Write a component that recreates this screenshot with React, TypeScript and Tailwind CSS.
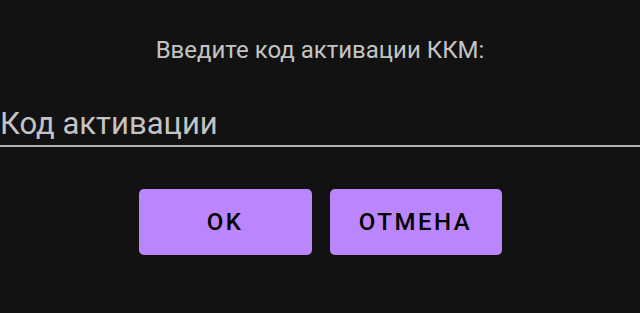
export default function App() {
  return (
    <div
      className="w-[640px] h-[313px] bg-[#121212] flex flex-col overflow-hidden"
      style={{ fontFamily: 'Roboto, "Liberation Sans", sans-serif' }}
    >
      <div className="pt-[36px] text-center text-[24px] leading-[28px] text-[#c4c4c4]">
        Введите код активации ККМ:
      </div>
      <div className="mt-[42px] border-b-2 border-[#b0b0b0] pb-[3px]">
        <div className="text-[31px] leading-[36px] text-[#c4c4c4]">Код активации</div>
      </div>
      <div className="mt-[42px] flex justify-center gap-[18px]">
        <button className="w-[173px] h-[66px] rounded-[5px] bg-[#bb86fc] text-black text-[24px] font-medium tracking-[2.5px]">
          OK
        </button>
        <button className="w-[172px] h-[66px] rounded-[5px] bg-[#bb86fc] text-black text-[24px] font-medium tracking-[2.5px]">
          ОТМЕНА
        </button>
      </div>
    </div>
  );
}
